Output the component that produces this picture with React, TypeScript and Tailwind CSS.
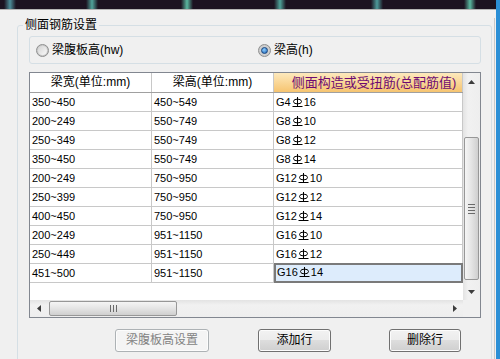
import React from "react";

const rows = [
  ["350~450", "450~549", "G4", "16"],
  ["200~249", "550~749", "G8", "10"],
  ["250~349", "550~749", "G8", "12"],
  ["350~450", "550~749", "G8", "14"],
  ["200~249", "750~950", "G12", "10"],
  ["250~399", "750~950", "G12", "12"],
  ["400~450", "750~950", "G12", "14"],
  ["200~249", "951~1150", "G16", "10"],
  ["250~449", "951~1150", "G16", "12"],
  ["451~500", "951~1150", "G16", "14"],
];

// rebar grade symbol (HRB335)
const Rebar = () => (
  <svg width="11" height="10" viewBox="0 0 11 10" className="inline-block mx-[1px] align-[-1px]">
    <line x1="5.5" y1="0" x2="5.5" y2="9" stroke="#000" strokeWidth="1" />
    <ellipse cx="5.5" cy="4.5" rx="4" ry="2.4" fill="none" stroke="#000" strokeWidth="1" />
    <line x1="0.5" y1="9.5" x2="10.5" y2="9.5" stroke="#000" strokeWidth="1" />
  </svg>
);

const Arrow = ({ dir }: { dir: "up" | "down" | "left" | "right" }) => {
  const pts = {
    up: "0,4 3.5,0 7,4",
    down: "0,0 3.5,4 7,0",
    left: "4,0 0,3.5 4,7",
    right: "0,0 4,3.5 0,7",
  }[dir];
  const vertical = dir === "up" || dir === "down";
  return (
    <svg width={vertical ? 7 : 4} height={vertical ? 4 : 7} viewBox={vertical ? "0 0 7 4" : "0 0 4 7"}>
      <polygon points={pts} fill="#3c3c3c" />
    </svg>
  );
};

const Radio = ({ checked }: { checked?: boolean }) => (
  <div className="w-[13px] h-[13px] rounded-full border border-[#8e8f8f] bg-[radial-gradient(circle_at_50%_50%,#e6e6e6,#bdbdbd)] flex items-center justify-center">
    <div
      className={
        checked
          ? "w-[7px] h-[7px] rounded-full bg-[radial-gradient(circle_at_40%_35%,#8ed0ff,#1a5fb4)] border border-[#17457e]"
          : "w-[9px] h-[9px] rounded-full bg-[linear-gradient(135deg,#d4d4d4,#fafafa)]"
      }
    />
  </div>
);

const btnBase =
  "h-[23px] rounded-[3px] border text-[12px] leading-[21px] text-center shadow-[inset_0_0_0_1px_#fcfcfc]";

const App = () => {
  return (
    <div className="w-[500px] h-[359px] overflow-hidden flex bg-[#f0f0f0] font-['Liberation_Sans','Noto_Sans_CJK_SC',sans-serif] text-black">
      <div className="flex-1 flex flex-col min-w-0">
        {/* desktop strip above the dialog */}
        <div className="h-[9px] shrink-0 flex bg-[#1c1321]">
          <div className="ml-[4px] w-[12px] bg-[linear-gradient(to_right,transparent,#4d8e9a,transparent)]" />
          <div className="ml-[70px] w-[12px] bg-[linear-gradient(to_right,transparent,#4fa39a,transparent)]" />
          <div className="ml-[83px] w-[12px] bg-[linear-gradient(to_right,transparent,#5ab8a0,transparent)]" />
          <div className="ml-[81px] w-[12px] bg-[linear-gradient(to_right,transparent,#4fa39a,transparent)]" />
          <div className="ml-[85px] w-[12px] bg-[linear-gradient(to_right,transparent,#4d9a9a,transparent)]" />
          <div className="ml-[81px] w-[12px] bg-[linear-gradient(to_right,transparent,#5ab8a0,transparent)]" />
        </div>
        <div className="h-px shrink-0 bg-[#b4b4b4]" />

        <div className="flex-1 min-h-0 overflow-hidden flex pt-[8px] pl-[17px]">
          <fieldset className="w-[475px] h-[400px] shrink-0 border border-[#d5dfe5] rounded-[3px]">
            <legend className="ml-[5px] px-[2px] text-[12px] leading-[14px]">侧面钢筋设置</legend>

            <div className="ml-[11px] mt-[4px] w-[452px] h-[28px] border border-[#d5dfe5] rounded-[3px] flex items-center text-[12px]">
              <div className="ml-[6px] flex items-center gap-[3px] w-[222px]">
                <Radio />
                <span>梁腹板高(hw)</span>
              </div>
              <div className="flex items-center gap-[3px]">
                <Radio checked />
                <span>梁高(h)</span>
              </div>
            </div>

            {/* grid */}
            <div className="ml-[11px] mt-[8px] w-[452px] border border-[#828790] bg-white flex flex-col">
              <div className="flex">
                <div className="w-[433px] flex flex-col">
                  <div className="grid grid-cols-[122px_122px_189px] h-[20px] border-b border-[#a0a0a0]">
                    <div className="border-r border-[#c8c8c8] text-[12px] leading-[19px] text-center">梁宽(单位:mm)</div>
                    <div className="border-r border-[#c8c8c8] text-[12px] leading-[19px] text-center">梁高(单位:mm)</div>
                    <div className="border-r border-[#c8c8c8] bg-[linear-gradient(to_bottom,#fde9bd,#f6c470)] text-[13px] leading-[19px] text-[#6e0b72] text-center pl-[12px] whitespace-nowrap">
                      侧面构造或受扭筋(总配筋值)
                    </div>
                  </div>
                  {rows.map((r, i) => {
                    const selected = i === rows.length - 1;
                    return (
                      <div key={i} className="grid grid-cols-[122px_122px_189px] h-[19px] text-[11px]">
                        <div className="border-r border-b border-[#c8c8c8] pl-[2px] leading-[18px]">{r[0]}</div>
                        <div className="border-r border-b border-[#c8c8c8] pl-[2px] leading-[18px]">{r[1]}</div>
                        {selected ? (
                          <div className="border-2 border-[#7a7a7a] bg-[#ddecfc] pl-[1px] leading-[15px] -mt-px h-[20px]">
                            {r[2]}
                            <Rebar />
                            {r[3]}
                          </div>
                        ) : (
                          <div className="border-r border-b border-[#c8c8c8] pl-[2px] leading-[18px]">
                            {r[2]}
                            <Rebar />
                            {r[3]}
                          </div>
                        )}
                      </div>
                    );
                  })}
                  <div className="h-[16px]" />
                </div>

                {/* vertical scrollbar */}
                <div className="w-[17px] flex flex-col bg-[linear-gradient(to_right,#e3e3e3,#f1f1f1_30%,#eeeeee)]">
                  <div className="h-[17px] flex items-center justify-center">
                    <Arrow dir="up" />
                  </div>
                  <div className="h-[47px]" />
                  <div className="mx-px h-[143px] rounded-[2px] border border-[#979797] bg-[linear-gradient(to_right,#f5f5f5,#e4e4e4_50%,#cfcfcf)] flex flex-col items-center justify-center gap-[2px]">
                    <div className="w-[7px] h-px bg-[#6a6a6a]" />
                    <div className="w-[7px] h-px bg-[#6a6a6a]" />
                    <div className="w-[7px] h-px bg-[#6a6a6a]" />
                    <div className="w-[7px] h-px bg-[#6a6a6a]" />
                  </div>
                  <div className="h-[3px]" />
                  <div className="h-[17px] flex items-center justify-center">
                    <Arrow dir="down" />
                  </div>
                </div>
              </div>

              {/* horizontal scrollbar */}
              <div className="flex h-[17px]">
                <div className="w-[433px] flex items-center bg-[linear-gradient(to_bottom,#e3e3e3,#f1f1f1_30%,#eeeeee)]">
                  <div className="w-[17px] h-full flex items-center justify-center">
                    <Arrow dir="left" />
                  </div>
                  <div className="ml-[2px] w-[128px] h-[15px] rounded-[2px] border border-[#979797] bg-[linear-gradient(to_bottom,#f5f5f5,#e4e4e4_50%,#cfcfcf)] flex items-center justify-center gap-[2px]">
                    <div className="w-px h-[7px] bg-[#6a6a6a]" />
                    <div className="w-px h-[7px] bg-[#6a6a6a]" />
                    <div className="w-px h-[7px] bg-[#6a6a6a]" />
                  </div>
                  <div className="flex-1" />
                  <div className="w-[17px] h-full flex items-center justify-center">
                    <Arrow dir="right" />
                  </div>
                </div>
                <div className="w-[17px] bg-[#f0f0f0]" />
              </div>
            </div>

            <div className="flex mt-[11px]">
              <div className={`${btnBase} ml-[97px] w-[94px] border-[#adb2b5] bg-[#f4f4f4] text-[#838383]`}>梁腹板高设置</div>
              <div className={`${btnBase} ml-[49px] w-[73px] border-[#707070] bg-[linear-gradient(to_bottom,#f2f2f2_0%,#ebebeb_50%,#dddddd_50%,#cfcfcf_100%)]`}>添加行</div>
              <div className={`${btnBase} ml-[58px] w-[72px] border-[#707070] bg-[linear-gradient(to_bottom,#f2f2f2_0%,#ebebeb_50%,#dddddd_50%,#cfcfcf_100%)]`}>删除行</div>
            </div>
          </fieldset>
          <div className="w-[2px] shrink-0" />
          <div className="w-px shrink-0 bg-[#c8c8c8]" />
          <div className="w-px shrink-0" />
        </div>
      </div>
      <div className="w-[4px] shrink-0 bg-[#2b8fd6]" />
    </div>
  );
};

export default App;
